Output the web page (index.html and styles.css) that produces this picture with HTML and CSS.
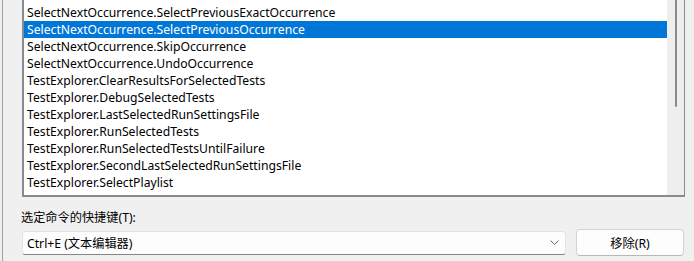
FILE: index.html
```html
<!DOCTYPE html>
<html lang="zh-CN">
<head>
<meta charset="utf-8">
<link rel="stylesheet" href="styles.css">
</head>
<body>
<div class="frame">
  <div class="listbox">
    <div class="rows">
      <div class="row">SelectNextOccurrence.SelectPreviousExactOccurrence</div>
      <div class="row selected">SelectNextOccurrence.SelectPreviousOccurrence</div>
      <div class="row">SelectNextOccurrence.SkipOccurrence</div>
      <div class="row">SelectNextOccurrence.UndoOccurrence</div>
      <div class="row">TestExplorer.ClearResultsForSelectedTests</div>
      <div class="row">TestExplorer.DebugSelectedTests</div>
      <div class="row">TestExplorer.LastSelectedRunSettingsFile</div>
      <div class="row">TestExplorer.RunSelectedTests</div>
      <div class="row">TestExplorer.RunSelectedTestsUntilFailure</div>
      <div class="row">TestExplorer.SecondLastSelectedRunSettingsFile</div>
      <div class="row">TestExplorer.SelectPlaylist</div>
    </div>
    <div class="scrollbar"><div class="thumb"></div></div>
  </div>
  <div class="label">选定命令的快捷键(T):</div>
  <div class="controls">
    <div class="combo">
      <span class="combo-text">Ctrl+E (文本编辑器)</span>
      <svg class="chevron" width="9" height="5" viewBox="0 0 9 5"><path d="M0.5 0.5 L4.5 4.5 L8.5 0.5" fill="none" stroke="#6a6a6a" stroke-width="1"/></svg>
    </div>
    <div class="button">移除(R)</div>
  </div>
</div>
</body>
</html>
```

FILE: styles.css
```css
html, body {
  margin: 0;
  padding: 0;
  background: #f0f0f0;
  height: 100%;
}
body {
  padding-left: 2px;
  font-family: "Noto Sans", "Noto Sans CJK SC", sans-serif;
  font-size: 12.2px;
  color: #000;
  overflow: hidden;
}
.frame {
  border-left: 1px solid #a0a0a0;
  height: 261px;
  padding-left: 19px;
  box-sizing: border-box;
}
.listbox {
  display: flex;
  width: 663px;
  box-sizing: border-box;
  height: 197px;
  border-left: 2px solid #868a91;
  border-right: 1px solid #868a91;
  border-bottom: 2px solid #868a91;
  background: #fff;
}
.rows {
  width: 643px;
  padding-top: 4px;
}
.row {
  height: 17px;
  line-height: 17px;
  padding-left: 3px;
  white-space: nowrap;
}
.row.selected {
  background: #0077d6;
  color: #fff;
}
.scrollbar {
  width: 17px;
  background: #eeeeee;
  position: relative;
}
.thumb {
  position: absolute;
  left: 8px;
  top: 0;
  width: 2px;
  height: 107px;
  background: #8a8a8a;
  border-radius: 0 0 1px 1px;
}
.label {
  margin-top: 12px;
  height: 17px;
  line-height: 17px;
  margin-left: -1px;
}
.controls {
  display: flex;
  align-items: center;
  gap: 10px;
  margin-top: 3px;
  width: 663px;
}
.combo {
  width: 544px;
  height: 24px;
  box-sizing: border-box;
  background: #fdfdfd;
  border: 1px solid #e3e3e3;
  border-bottom: 1px solid #868686;
  border-radius: 3px;
  display: flex;
  align-items: center;
  justify-content: space-between;
  padding: 0 6px 0 4px;
}
.chevron {
  display: block;
}
.button {
  width: 108px;
  height: 27px;
  box-sizing: border-box;
  background: #fdfdfd;
  border: 1px solid #d4d4d4;
  border-bottom-color: #b8b8b8;
  border-radius: 4px;
  display: flex;
  align-items: center;
  justify-content: center;
}
```
